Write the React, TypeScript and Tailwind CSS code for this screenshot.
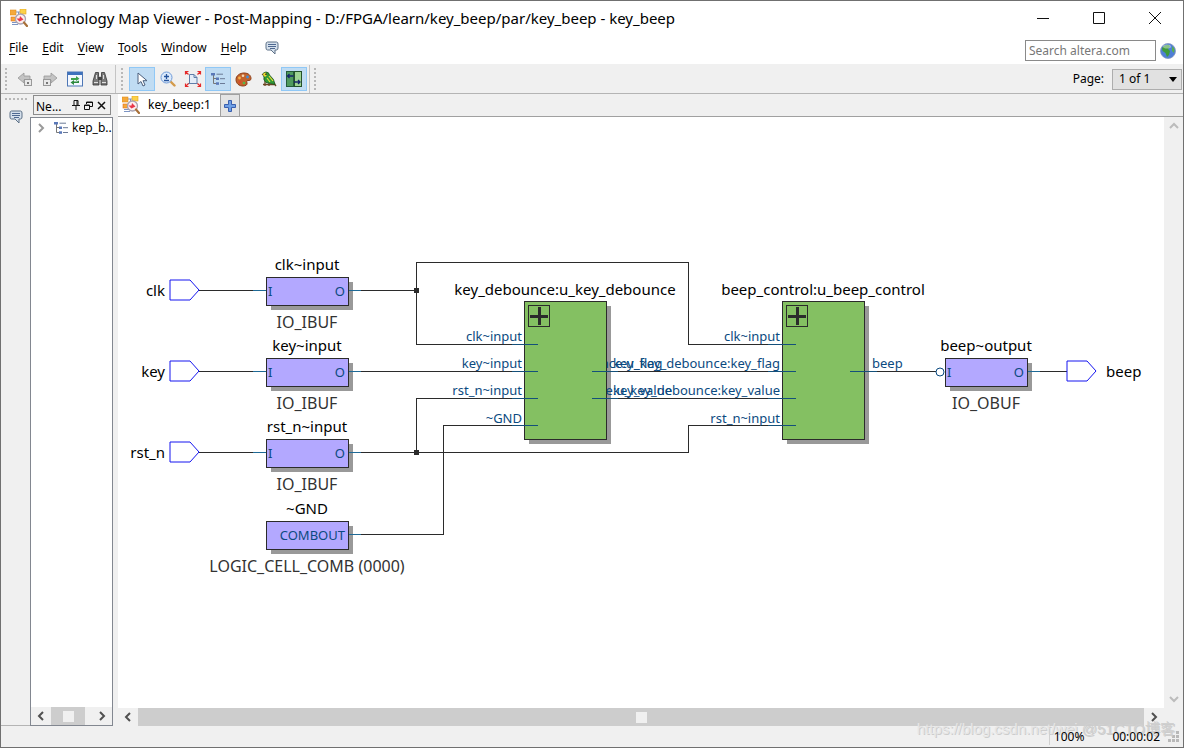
import type { ReactNode } from 'react';

const uiFont = "font-['Noto_Sans','Open_Sans',sans-serif]";

/* ---------- icons ---------- */

function AppIcon() {
    return (
        <svg width="18" height="18" viewBox="0 0 18 18" aria-hidden="true">
            <path d="M6 3h5M6 10h3M8.500 3v3M2 13.500h6M2 15.500h6" stroke="#7d95c4" fill="none" />
            <rect x="0" y="1" width="6" height="5" fill="#f5a93a" stroke="#e08f1e" strokeWidth=".6" />
            <rect x="10" y="0" width="6" height="5" fill="#fbd24a" stroke="#e5a21e" strokeWidth=".6" />
            <rect x="1" y="8" width="5" height="4" fill="#f5a93a" stroke="#e0701e" strokeWidth=".6" />
            <circle cx="10.500" cy="10" r="5" fill="#fdeeee" stroke="#a9a3b0" strokeWidth="1.300" />
            <path d="M6.500 9.500h3l.5-2.500 3.500 3.500-4 2z" fill="#e8384a" />
            <path d="M14 13.500l3 3.500" stroke="#a9713a" strokeWidth="2.200" strokeLinecap="round" />
        </svg>
    );
}

function FeedbackIcon() {
    return (
        <svg width="14" height="14" viewBox="0 0 14 14" aria-hidden="true">
            <path
                d="M2.500 1h9Q13 1 13 3v4q0 2-1.500 2H10v4L6 9H2.500Q1 9 1 7V3q0-2 1.500-2z"
                fill="#d5e0ec"
                stroke="#5d7187"
            />
            <path d="M3 3.500h8M3 5.500h8M5 7.500h5" stroke="#3e5a86" strokeWidth=".9" />
        </svg>
    );
}

function BackIcon() {
    return (
        <svg width="16" height="16" viewBox="0 0 16 16" aria-hidden="true">
            <path d="M1 7l6-5v3h6v4H7v3z" fill="#c4c4c4" stroke="#989898" strokeWidth=".8" />
            <rect x="7.500" y="8.500" width="7" height="6" fill="#e8e8e8" stroke="#999" />
            <rect x="10" y="11" width="2" height="2" fill="#777" />
        </svg>
    );
}

function ForwardIcon() {
    return (
        <svg width="16" height="16" viewBox="0 0 16 16" aria-hidden="true">
            <path d="M15 7L9 2v3H2v4h7v3z" fill="#c4c4c4" stroke="#989898" strokeWidth=".8" />
            <rect x="1.500" y="8.500" width="7" height="6" fill="#e8e8e8" stroke="#999" />
            <rect x="4" y="11" width="2" height="2" fill="#777" />
        </svg>
    );
}

function RefreshIcon() {
    return (
        <svg width="16" height="16" viewBox="0 0 16 16" aria-hidden="true">
            <rect x=".5" y="1" width="15" height="14" fill="#f4f8ff" stroke="#4d76b5" />
            <rect x="1" y="1" width="14" height="3" fill="#3f73bd" />
            <path d="M4 9V7h5V5l3.500 2.700L9 10V9z" fill="#3fa34d" />
            <path d="M12 9.500V12H7v2l-3.500-2.600L7 9v1.500h3z" fill="#2d8a3e" />
        </svg>
    );
}

function BinocularsIcon() {
    return (
        <svg width="16" height="16" viewBox="0 0 16 16" aria-hidden="true">
            <path d="M3.500 1.500h3V5L7 6v8H1v-4zM9.500 1.500h3L15 10v4H9V6l.5-1z" fill="#7a7a7a" stroke="#333" strokeWidth=".8" />
            <rect x="6" y="6" width="4" height="3" fill="#444" />
            <path d="M2 11.500h4M10 11.500h4M4.500 4v4M11.500 4v4" stroke="#e0e0e0" />
        </svg>
    );
}

function PointerIcon() {
    return (
        <svg width="18" height="18" viewBox="0 0 18 18" aria-hidden="true">
            <path d="M5 3v11l3-2.500 2 4.500 2-1-2-4.300h4z" fill="#fff" stroke="#4c5f7c" strokeWidth="1" />
        </svg>
    );
}

function ZoomIcon() {
    return (
        <svg width="16" height="16" viewBox="0 0 16 16" aria-hidden="true">
            <path d="M10.500 10.500l4 4" stroke="#d39a4a" strokeWidth="2.400" strokeLinecap="round" />
            <circle cx="6.500" cy="6.500" r="5.500" fill="#dceafb" stroke="#6f9bd8" />
            <path d="M6.500 3v5M4 5.500h5M4 9.500h5" stroke="#24539c" strokeWidth="1.300" />
        </svg>
    );
}

function FitIcon() {
    return (
        <svg width="18" height="16" viewBox="0 0 18 16" aria-hidden="true">
            <path d="M5.500 3.500H10l3 3v6H5.500z" fill="#e4edf8" stroke="#5f7ea9" />
            <path d="M10 3.500v3h3M4 12.500h9.500" stroke="#5f7ea9" fill="none" />
            <path
                d="M1.500 3.500v-3h3M1.500.5l3 3M13.500.5h3v3M16.500.5l-3 3M1.500 12.500v3h3M1.500 15.500l3-3M13.500 15.500h3v-3M16.500 15.500l-3-3"
                stroke="#e52929"
                strokeWidth="1.200"
                fill="none"
            />
        </svg>
    );
}

function TreeIcon() {
    return (
        <svg width="14" height="12" viewBox="0 0 14 12" aria-hidden="true">
            <path d="M2.500 2v8.500H6M2.500 5.500H6" stroke="#777" fill="none" />
            <rect x="0" y="0" width="4" height="2.500" fill="#5a78b8" />
            <rect x="5" y="4.500" width="3" height="2.500" fill="#5a78b8" />
            <rect x="5" y="9.300" width="3" height="2.500" fill="#5a78b8" />
            <path d="M5.500 1.200H12M9 5.700h5M9 10.500h5" stroke="#6b7a96" />
        </svg>
    );
}

function PaletteIcon() {
    return (
        <svg width="17" height="15" viewBox="0 0 17 15" aria-hidden="true">
            <path
                d="M9 1c4.500 0 7 2.500 7 5.500 0 2-1.500 2-3 2s-1.500 1-1 2.500-1 3-4 3c-4 0-7-2.500-7-6.500S5 1 9 1z"
                fill="#c2632c"
                stroke="#8f3f19"
            />
            <circle cx="4.500" cy="6" r="1.400" fill="#f6b24a" />
            <circle cx="8" cy="3.700" r="1.300" fill="#f3d7b8" />
            <circle cx="12.500" cy="5" r="1.400" fill="#3f8fdb" />
            <circle cx="5" cy="10" r="1.400" fill="#d9482f" />
            <circle cx="9" cy="11" r="1.300" fill="#54b848" />
        </svg>
    );
}

function BirdIcon() {
    return (
        <svg width="16" height="16" viewBox="0 0 16 16" aria-hidden="true">
            <path d="M1 3l4 2M2 13.500h12.500M4 10v5M8 12v3M12 11l3 4" stroke="#6b4522" strokeWidth="1.300" />
            <path d="M2 4Q2 1 5 1q3 0 3.500 3l4 4.500 1.500 5-4-1-5-1Q2 9 3 6z" fill="#2f9a35" stroke="#1d4f1e" strokeWidth=".8" />
            <path d="M2 4Q2 1.500 4.500 1.500L6 4 4 6z" fill="#f0d530" />
            <path d="M8 5l4 5M6 7l3 4" stroke="#e6dc3a" strokeWidth="1.200" />
            <circle cx="5" cy="3.200" r=".8" fill="#111" />
        </svg>
    );
}

function PanesIcon() {
    return (
        <svg width="16" height="16" viewBox="0 0 16 16" aria-hidden="true">
            <rect x=".5" y=".5" width="7" height="15" fill="#4f9a5e" stroke="#245a3a" />
            <rect x="8.500" y=".5" width="7" height="15" fill="#9ed493" stroke="#24512a" />
            <path d="M1.500 5h6M3.500 3L1.500 5l2 2M8 11h6M12 9l2 2-2 2" stroke="#16246b" strokeWidth="1.300" fill="none" />
        </svg>
    );
}

function GlobeIcon() {
    return (
        <svg width="16" height="16" viewBox="0 0 16 16" aria-hidden="true">
            <circle cx="8" cy="8" r="7.500" fill="#4f7fd6" stroke="#8597c0" strokeWidth=".8" />
            <path d="M2 5q3-4 7-3l1 2-2 2 2 2-1 4-2 2-1.500-4L2.500 8z" fill="#3f9b3b" />
            <path d="M12 3l2.500 3-.5 4-2-2z" fill="#58b04c" />
            <ellipse cx="7" cy="3.500" rx="4" ry="2" fill="#fff" opacity=".4" />
        </svg>
    );
}

function PlusIcon() {
    return (
        <svg width="12" height="12" viewBox="0 0 12 12" aria-hidden="true">
            <path d="M4.500.5h3v4h4v3h-4v4h-3v-4h-4v-3h4z" fill="#6fa0e6" stroke="#3a5fae" />
        </svg>
    );
}

const arrowPaths = {
    left: 'M7 1L3 5l4 4',
    right: 'M3 1l4 4-4 4',
    up: 'M1 7l4-4 4 4',
    down: 'M1 3l4 4 4-4',
};

function Arrow({ dir, stroke = '#505050' }: { dir: keyof typeof arrowPaths; stroke?: string }) {
    return (
        <svg width="10" height="10" viewBox="0 0 10 10" aria-hidden="true" className="shrink-0">
            <path d={arrowPaths[dir]} fill="none" stroke={stroke} strokeWidth="2" />
        </svg>
    );
}

/* ---------- toolbar pieces ---------- */

function Grip() {
    return (
        <div className="mx-1 flex flex-col gap-[2px]" aria-hidden="true">
            {[0, 1, 2, 3, 4, 5].map((i) => (
                <span key={i} className="size-[2px] bg-[#b8b8b8]" />
            ))}
        </div>
    );
}

function ToolButton({ label, active, children }: { label: string; active?: boolean; children: ReactNode }) {
    return (
        <button
            type="button"
            aria-label={label}
            aria-pressed={active}
            className={
                active
                    ? 'flex h-6 w-[26px] items-center justify-center border border-[#90c8f6] bg-[#c0dcf3]'
                    : 'flex h-6 w-[25px] items-center justify-center'
            }
        >
            {children}
        </button>
    );
}

function HScrollBar({ thumb }: { thumb: string }) {
    return (
        <div className="flex h-[18px] shrink-0 bg-[#f0f0f0]">
            <button type="button" aria-label="Scroll left" className="flex w-5 shrink-0 items-center justify-center">
                <Arrow dir="left" />
            </button>
            <div className="flex flex-1">
                <div className={`flex items-center justify-center bg-[#cdcdcd] ${thumb}`}>
                    <span className="size-[11px] bg-[#f0f0f0]" />
                </div>
            </div>
            <button type="button" aria-label="Scroll right" className="flex w-5 shrink-0 items-center justify-center">
                <Arrow dir="right" />
            </button>
        </div>
    );
}

/* ---------- schematic ---------- */

const WIRE = '#2b2b2b';
const PIN = '#0b4a80';

const wires = [
    'M81 173H148',
    'M230 173H298',
    'M406 227H298V145H570V227H664',
    'M81 254H148',
    'M230 254H406',
    'M81 335H148',
    'M230 335H570V308H664',
    'M298 335V281H406',
    'M230 417H325V308H406',
    'M488 254H664',
    'M488 281H664',
    'M746 254H818',
    'M909 254H949',
];

const bufferStubs = ['M135 173H148', 'M230 173H243', 'M135 254H148', 'M230 254H243', 'M135 335H148', 'M230 335H243', 'M230 417H243', 'M909 254H922'];

const blockStubs = [
    'M394 227H420',
    'M394 254H420',
    'M394 281H420',
    'M394 308H420',
    'M474 254H500',
    'M474 281H500',
    'M650 227H678',
    'M650 254H678',
    'M650 281H678',
    'M650 308H678',
    'M732 254H759',
];

const buffers = [
    { name: 'clk~input', kind: 'IO_IBUF', x: 148, y: 160, input: 'I', output: 'O' },
    { name: 'key~input', kind: 'IO_IBUF', x: 148, y: 241, input: 'I', output: 'O' },
    { name: 'rst_n~input', kind: 'IO_IBUF', x: 148, y: 322, input: 'I', output: 'O' },
    { name: '~GND', kind: 'LOGIC_CELL_COMB (0000)', x: 148, y: 404, input: '', output: 'COMBOUT' },
    { name: 'beep~output', kind: 'IO_OBUF', x: 827, y: 241, input: 'I', output: 'O' },
];

const blocks = [
    { name: 'key_debounce:u_key_debounce', x: 406 },
    { name: 'beep_control:u_beep_control', x: 664 },
];

const ports = [
    { name: 'clk', x: 52, y: 173, labelX: 47, anchor: 'end' as const },
    { name: 'key', x: 52, y: 254, labelX: 47, anchor: 'end' as const },
    { name: 'rst_n', x: 52, y: 335, labelX: 47, anchor: 'end' as const },
    { name: 'beep', x: 949, y: 254, labelX: 988, anchor: 'start' as const },
];

const pinLabels = [
    { text: 'clk~input', x: 404, y: 224, anchor: 'end' as const },
    { text: 'key~input', x: 404, y: 251, anchor: 'end' as const },
    { text: 'rst_n~input', x: 404, y: 278, anchor: 'end' as const },
    { text: '~GND', x: 404, y: 306, anchor: 'end' as const },
    { text: 'key_flag', x: 495, y: 251, anchor: 'start' as const },
    { text: 'key_value', x: 495, y: 278, anchor: 'start' as const },
    { text: 'clk~input', x: 662, y: 224, anchor: 'end' as const },
    { text: 'key_debounce:u_key_debounce:key_flag', x: 662, y: 251, anchor: 'end' as const },
    { text: 'key_debounce:u_key_debounce:key_value', x: 662, y: 278, anchor: 'end' as const },
    { text: 'rst_n~input', x: 662, y: 306, anchor: 'end' as const },
    { text: 'beep', x: 754, y: 251, anchor: 'start' as const },
];

function Schematic() {
    return (
        <svg width="1046" height="590" viewBox="0 0 1046 590" className="shrink-0" role="img" aria-label="Post-mapping schematic">
            <g fill="#999" shapeRendering="crispEdges">
                {buffers.map((b) => (
                    <rect key={b.name} x={b.x + 5} y={b.y + 5} width="82" height="28" />
                ))}
                {blocks.map((b) => (
                    <rect key={b.name} x={b.x + 5} y="189" width="82" height="138" />
                ))}
            </g>

            <g stroke={WIRE} fill="none" shapeRendering="crispEdges">
                {wires.map((d) => (
                    <path key={d} d={d} />
                ))}
            </g>
            <g stroke="#1f6a96" fill="none" shapeRendering="crispEdges">
                {bufferStubs.map((d) => (
                    <path key={d} d={d} />
                ))}
            </g>
            <rect x="296" y="171" width="5" height="5" fill={WIRE} />
            <rect x="296" y="333" width="5" height="5" fill={WIRE} />

            <g fill={PIN} className="text-[13px]">
                {pinLabels.map((p) => (
                    <text key={`${p.text}-${p.x}`} x={p.x} y={p.y} textAnchor={p.anchor}>
                        {p.text}
                    </text>
                ))}
            </g>

            {buffers.map((b) => (
                <g key={b.name}>
                    <rect x={b.x} y={b.y} width="82" height="28" fill="#b3a8ff" stroke="#2b2b2b" shapeRendering="crispEdges" />
                    <text x={b.x + 41} y={b.y - 7} textAnchor="middle" className="text-[15px]">
                        {b.name}
                    </text>
                    <text x={b.x + 41} y={b.y + 51} textAnchor="middle" fill="#333" className="text-base">
                        {b.kind}
                    </text>
                    <text x={b.x + 2} y={b.y + 19} fill={PIN} className="text-[13px]">
                        {b.input}
                    </text>
                    <text x={b.x + 79} y={b.y + 19} textAnchor="end" fill={PIN} className="text-[13px]">
                        {b.output}
                    </text>
                </g>
            ))}

            {blocks.map((b) => (
                <g key={b.name}>
                    <rect x={b.x} y="184" width="82" height="138" fill="#84c062" stroke="#2b2b2b" shapeRendering="crispEdges" />
                    <g stroke="#2b2b2b" fill="none" shapeRendering="crispEdges">
                        <rect x={b.x + 4} y="188" width="21" height="21" />
                        <path d={`M${b.x + 6} 199h18M${b.x + 15} 190v18`} strokeWidth="3" />
                    </g>
                    <text x={b.x + 41} y="178" textAnchor="middle" className="text-[15px]">
                        {b.name}
                    </text>
                </g>
            ))}

            <g stroke="#14507a" fill="none" shapeRendering="crispEdges">
                {blockStubs.map((d) => (
                    <path key={d} d={d} />
                ))}
            </g>
            <circle cx="822" cy="255" r="4" fill="#fff" stroke={PIN} />

            {ports.map((p) => (
                <g key={p.name}>
                    <path d={`M${p.x} ${p.y - 10}h20l9 10-9 10h-20z`} fill="#fff" stroke="#1414f0" />
                    <text x={p.labelX} y={p.y + 6} textAnchor={p.anchor} className="text-[15px]">
                        {p.name}
                    </text>
                </g>
            ))}
        </svg>
    );
}

/* ---------- window ---------- */

const menus = ['File', 'Edit', 'View', 'Tools', 'Window', 'Help'];

function TitleBar() {
    return (
        <header className="flex h-[34px] shrink-0 items-center pl-[9px]">
            <AppIcon />
            <h1 className="ml-[6px] flex-1 truncate text-[15px]">
                Technology Map Viewer - Post-Mapping - D:/FPGA/learn/key_beep/par/key_beep - key_beep
            </h1>
            <button type="button" aria-label="Minimize" className="flex h-full w-14 items-center justify-center">
                <svg width="12" height="12" viewBox="0 0 12 12" stroke="#111" shapeRendering="crispEdges">
                    <path d="M0 6h12" />
                </svg>
            </button>
            <button type="button" aria-label="Maximize" className="flex h-full w-14 items-center justify-center">
                <svg width="12" height="12" viewBox="0 0 12 12" fill="none" stroke="#111">
                    <path d="M.5.5h11v11H.5z" />
                </svg>
            </button>
            <button type="button" aria-label="Close" className="flex h-full w-14 items-center justify-center">
                <svg width="12" height="12" viewBox="0 0 12 12" stroke="#111">
                    <path d="M0 0l12 12M12 0L0 12" />
                </svg>
            </button>
        </header>
    );
}

function MenuBar() {
    return (
        <div className="flex h-[29px] shrink-0 items-start pl-2">
            <nav className="flex h-[25px] items-center gap-[14px] text-xs">
                {menus.map((m) => (
                    <button key={m} type="button">
                        <span className="underline underline-offset-2">{m[0]}</span>
                        {m.slice(1)}
                    </button>
                ))}
                <button type="button" aria-label="Feedback" className="ml-1">
                    <FeedbackIcon />
                </button>
            </nav>
            <div className="mt-[5px] mr-[7px] ml-auto flex items-center gap-1">
                <input
                    type="text"
                    aria-label="Search altera.com"
                    placeholder="Search altera.com"
                    className="h-[21px] w-[131px] border border-[#8a8a8a] bg-white px-[3px] text-xs placeholder:text-[#777]"
                />
                <button type="button" aria-label="Go">
                    <GlobeIcon />
                </button>
            </div>
        </div>
    );
}

function ToolBar() {
    return (
        <div className="flex h-[30px] shrink-0 items-center border-b border-[#b4b4b4] bg-[#f0f0f0] pt-px">
            <Grip />
            <div className="mr-[3px] ml-px flex">
                <ToolButton label="Back"><BackIcon /></ToolButton>
                <ToolButton label="Forward"><ForwardIcon /></ToolButton>
                <ToolButton label="Refresh"><RefreshIcon /></ToolButton>
                <ToolButton label="Find"><BinocularsIcon /></ToolButton>
            </div>
            <span className="mr-px h-full w-px bg-[#c4c4c4]" />
            <Grip />
            <div className="ml-[2px] flex">
                <ToolButton label="Select" active><PointerIcon /></ToolButton>
                <ToolButton label="Zoom"><ZoomIcon /></ToolButton>
                <ToolButton label="Fit in window"><FitIcon /></ToolButton>
                <ToolButton label="Netlist navigator" active><TreeIcon /></ToolButton>
                <ToolButton label="Colors"><PaletteIcon /></ToolButton>
                <ToolButton label="Bird's eye view"><BirdIcon /></ToolButton>
                <ToolButton label="Split panes" active><PanesIcon /></ToolButton>
            </div>
            <span className="ml-[2px] h-full w-px bg-[#c4c4c4]" />
            <Grip />
            <label htmlFor="page" className="mr-2 ml-auto text-xs">
                Page:
            </label>
            <div className="relative mr-px flex">
                <select id="page" className="h-[21px] w-[70px] appearance-none border border-[#adadad] bg-[#e1e1e1] pl-[6px] text-xs">
                    <option>1 of 1</option>
                </select>
                <svg width="8" height="5" viewBox="0 0 8 5" className="pointer-events-none absolute top-2 right-[5px]">
                    <path d="M0 0h8L4 5z" />
                </svg>
            </div>
        </div>
    );
}

function Navigator() {
    return (
        <aside className="flex w-[83px] shrink-0 flex-col">
            <div className="mt-px mr-[2px] ml-[3px] flex h-5 shrink-0 items-center border border-[#8c8c8c] pr-1 pl-[2px] text-xs">
                <span className="pt-1">Ne...</span>
                <div className="ml-auto flex items-center gap-1">
                    <button type="button" aria-label="Pin">
                        <svg width="8" height="10" viewBox="0 0 8 10" fill="none" stroke="#111">
                            <path d="M2 .5h4v5H2zM5 .5v5M0 5.500h8M4 6v4" />
                        </svg>
                    </button>
                    <button type="button" aria-label="Float">
                        <svg width="9" height="9" viewBox="0 0 9 9" fill="none" stroke="#111">
                            <path d="M2.500 3V1h6v4.500H6M.5 4h5v4.500h-5zM2.500 1.500h6M.5 4.500h5" />
                        </svg>
                    </button>
                    <button type="button" aria-label="Close panel">
                        <svg width="9" height="9" viewBox="0 0 9 9" stroke="#111" strokeWidth="1.500">
                            <path d="M1 1l7 7M8 1L1 8" />
                        </svg>
                    </button>
                </div>
            </div>
            <div className="mt-[2px] flex min-h-0 flex-1 flex-col border border-[#828790] bg-white">
                <ul className="min-h-0 flex-1">
                    <li className="flex h-5 items-center pl-[5px] text-xs whitespace-nowrap">
                        <Arrow dir="right" stroke="#9a9a9a" />
                        <span className="mr-1 ml-2 shrink-0">
                            <TreeIcon />
                        </span>
                        kep_b..
                    </li>
                </ul>
                <HScrollBar thumb="w-[34px]" />
            </div>
        </aside>
    );
}

export default function App() {
    return (
        <div className={`relative flex h-screen flex-col border border-[#707070] bg-white text-black ${uiFont}`}>
            <TitleBar />
            <MenuBar />
            <ToolBar />

            <div className="flex min-h-0 flex-1 bg-[#f0f0f0]">
                <div className="flex w-[29px] shrink-0 flex-col items-center border-b border-[#b4b4b4] pt-1">
                    <div className="flex gap-[2px]" aria-hidden="true">
                        {[0, 1, 2, 3, 4, 5].map((i) => (
                            <span key={i} className="size-[2px] bg-[#b8b8b8]" />
                        ))}
                    </div>
                    <button type="button" aria-label="Messages" className="mt-[10px]">
                        <FeedbackIcon />
                    </button>
                </div>

                <Navigator />

                <main className="ml-[5px] flex min-w-0 flex-1 flex-col">
                    <div className="flex h-[23px] shrink-0 border-b border-[#a0a0a0] text-xs">
                        <button type="button" className="flex w-[102px] items-center gap-2 bg-white pl-1">
                            <AppIcon />
                            key_beep:1
                        </button>
                        <button
                            type="button"
                            aria-label="New tab"
                            className="flex w-5 items-center justify-center border border-b-0 border-[#a0a0a0] bg-[#e4e4e4]"
                        >
                            <PlusIcon />
                        </button>
                    </div>
                    <div className="flex min-h-0 flex-1">
                        <div className="flex min-w-0 flex-1 flex-col">
                            <div className="flex min-h-0 flex-1 items-center justify-center overflow-hidden bg-white pb-[2px]">
                                <Schematic />
                            </div>
                            <HScrollBar thumb="w-full" />
                        </div>
                        <div className="mb-[18px] flex w-[19px] shrink-0 flex-col items-center justify-between py-1">
                            <button type="button" aria-label="Scroll up">
                                <Arrow dir="up" stroke="#bcbcbc" />
                            </button>
                            <button type="button" aria-label="Scroll down">
                                <Arrow dir="down" stroke="#bcbcbc" />
                            </button>
                        </div>
                    </div>
                </main>
            </div>

            <footer className="flex h-[21px] shrink-0 items-center justify-end bg-[#f0f0f0] text-xs">
                <span className="relative z-10 border-l border-[#d0d0d0] pl-1">100%</span>
                <span className="relative z-10 ml-7">00:00:02</span>
                <svg width="11" height="11" viewBox="0 0 11 11" className="mr-1 ml-2" fill="#b8b8b8" aria-hidden="true">
                    <path d="M8 0h3v3H8zM4 4h3v3H4zM8 4h3v3H8zM0 8h3v3H0zM4 8h3v3H4zM8 8h3v3H8z" />
                </svg>
            </footer>

            <div className="pointer-events-none absolute right-2 bottom-[6px] flex items-center gap-1 font-['Liberation_Sans','Noto_Sans_CJK_SC',sans-serif] text-[15px] leading-6 text-[#e6e6e6] [text-shadow:1px_1px_0_#cccccc]">
                <span>https://blog.csdn.net/wei</span>
                <span className="text-[#d0d0d0]">@51CTO博客</span>
            </div>
        </div>
    );
}
